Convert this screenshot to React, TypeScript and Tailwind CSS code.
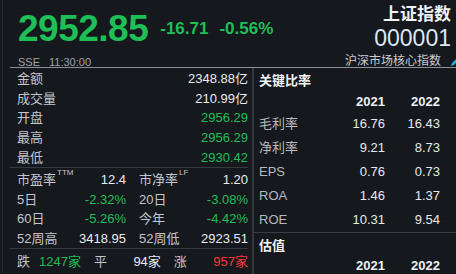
import React from 'react';

const green = 'text-[#1fbf57]';
const red = 'text-[#ff3636]';

const quote = [
  { label: '金额', value: '2348.88亿', tone: 'text-[#e8ecf2]' },
  { label: '成交量', value: '210.99亿', tone: 'text-[#e8ecf2]' },
  { label: '开盘', value: '2956.29', tone: green },
  { label: '最高', value: '2956.29', tone: green },
  { label: '最低', value: '2930.42', tone: green },
];

type Cell = { label: string; sup?: string; value: string; tone: string };

const stats: [Cell, Cell][] = [
  [
    { label: '市盈率', sup: 'TTM', value: '12.4', tone: 'text-[#e8ecf2]' },
    { label: '市净率', sup: 'LF', value: '1.20', tone: 'text-[#e8ecf2]' },
  ],
  [
    { label: '5日', value: '-2.32%', tone: green },
    { label: '20日', value: '-3.08%', tone: green },
  ],
  [
    { label: '60日', value: '-5.26%', tone: green },
    { label: '今年', value: '-4.42%', tone: green },
  ],
  [
    { label: '52周高', value: '3418.95', tone: 'text-[#e8ecf2]' },
    { label: '52周低', value: '2923.51', tone: 'text-[#e8ecf2]' },
  ],
];

const ratios = [
  { label: '毛利率', v: ['16.76', '16.43'] },
  { label: '净利率', v: ['9.21', '8.73'] },
  { label: 'EPS', v: ['0.76', '0.73'] },
  { label: 'ROA', v: ['1.46', '1.37'] },
  { label: 'ROE', v: ['10.31', '9.54'] },
];

const years = ['2021', '2022', '2023'];

const StatCell = ({ c }: { c: Cell }) => (
  <div className="flex flex-1 items-center justify-between">
    <span className="text-[#c3c7cd]">
      {c.label}
      {c.sup && <sup className="ml-px text-[8px] align-top leading-none">{c.sup}</sup>}
    </span>
    <span className={c.tone}>{c.value}</span>
  </div>
);

const YearRow = ({ className }: { className: string }) => (
  <div className={`flex h-[20px] items-center font-bold text-[#eef1f5] ${className}`}>
    <div className="w-[76px]" />
    {years.map((y) => (
      <div key={y} className="w-[55px] text-right">{y}</div>
    ))}
  </div>
);

export default function App() {
  return (
    <div
      className="w-[456px] h-[274px] overflow-hidden bg-[#15181d] text-[13px] leading-none"
      style={{ fontFamily: '"Liberation Sans", "Noto Sans CJK SC", sans-serif' }}
    >
      <div className="ml-[2px] h-full border-l border-[#262a30] pl-[7px]">
        {/* header */}
        <div className="flex h-[68px] justify-between border-b border-[#8d9096]">
          <div className="pl-[8px] pt-[10px]">
            <div className={`flex items-center ${green}`}>
              <span className="text-[37px] font-bold leading-none tracking-[-0.5px]">2952.85</span>
              <span className="ml-[12px] text-[17px] font-bold">-16.71</span>
              <span className="ml-[11px] text-[17px] font-bold">-0.56%</span>
            </div>
            <div className="mt-[10px] text-[11px] text-[#9ea3aa]">
              SSE<span className="ml-[9px]">11:30:00</span>
            </div>
          </div>
          <div className="flex flex-col items-end pt-[6px]">
            <div className="pr-[5px] text-[17px] font-bold text-[#eef1f5]">上证指数</div>
            <div className="mt-[4px] pr-[5px] text-[23px] text-[#dce6f2]">000001</div>
            <div className="mt-[5px] flex items-center text-[12px] text-[#c9ccd1]">
              沪深市场核心指数
              <svg width="12" height="12" viewBox="0 0 12 12" className="ml-[9px] -mr-[6px]">
                <path d="M1 11 L2 8 L8 2 L10 4 L4 10 Z" fill="#2aa7d6" />
              </svg>
            </div>
          </div>
        </div>

        {/* body */}
        <div className="flex h-[206px]">
          <div className="w-[242px] shrink-0 pr-[4px]">
            <div className="border-b border-[#34383f] pt-[1px]">
              {quote.map((r) => (
                <div key={r.label} className="flex h-[19.6px] items-center justify-between pl-[7px]">
                  <span className="text-[#c3c7cd]">{r.label}</span>
                  <span className={r.tone}>{r.value}</span>
                </div>
              ))}
            </div>
            <div className="border-b border-[#34383f] pt-[2px]">
              {stats.map((row, i) => (
                <div key={i} className="flex h-[19.5px] items-center gap-[13px] pl-[7px]">
                  <StatCell c={row[0]} />
                  <StatCell c={row[1]} />
                </div>
              ))}
            </div>
            <div className="flex h-[26px] items-center pl-[7px]">
              <span className="text-[#c3c7cd]">跌</span>
              <span className={`ml-[9px] ${green}`}>1247家</span>
              <span className="ml-[13px] text-[#c3c7cd]">平</span>
              <span className="ml-auto text-[#e8ecf2]">94家</span>
              <span className="ml-[13px] text-[#c3c7cd]">涨</span>
              <span className={`ml-auto ${red}`}>957家</span>
            </div>
          </div>

          <div className="flex-1 overflow-hidden border-l-2 border-[#33373d]">
            <div className="w-[260px]">
              <div className="pl-[5px] pt-[6px] font-bold text-[#f2f4f7]">关键比率</div>
              <YearRow className="mt-[4px]" />
              {ratios.map((r) => (
                <div key={r.label} className="flex h-[24px] items-center">
                  <div className="w-[76px] pl-[5px] text-[#b5b9bf]">{r.label}</div>
                  {r.v.map((v, i) => (
                    <div key={i} className="w-[55px] text-right text-[#e6eaf0]">{v}</div>
                  ))}
                </div>
              ))}
              <div className="mt-[1px] border-t border-[#3a3d43] pl-[5px] pt-[6px] font-bold text-[#f2f4f7]">估值</div>
              <YearRow className="mt-[3px]" />
            </div>
          </div>
        </div>
      </div>
    </div>
  );
}
